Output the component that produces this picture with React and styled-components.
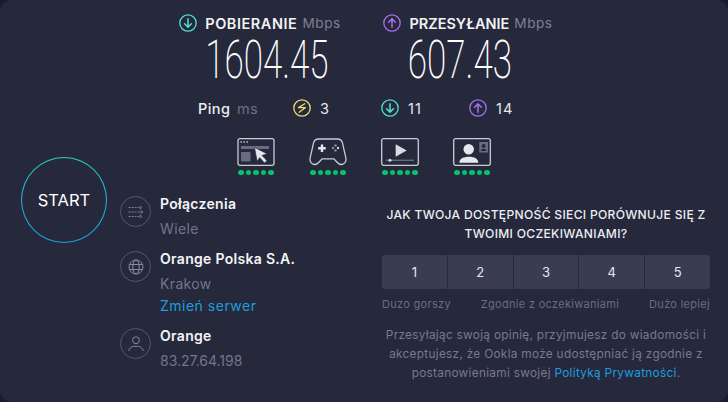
import React from "react";
import styled, { createGlobalStyle } from "styled-components";

const Global = createGlobalStyle`
  html, body { margin: 0; padding: 0; background: #1a1b2e; }
  #root { width: 728px; height: 402px; }
  * { box-sizing: border-box; }
`;

const Page = styled.div`
  width: 728px; height: 402px; background: #26283c; border-radius: 12px; overflow: hidden;
  font-family: Inter, "Liberation Sans", sans-serif; color: #fff; display: flex; flex-direction: column;
`;
const Speeds = styled.div`
  display: flex; height: 95px; padding: 13px 0 0 180px; gap: 44px;
`;
const SpeedCol = styled.div`
  display: flex; flex-direction: column; align-items: center; width: ${p => p.$w}px;
`;
const SpeedHead = styled.div`
  display: flex; align-items: center; gap: 8px; height: 20px; font-size: 14.5px; letter-spacing: ${p => p.$ls}px; font-weight: 600; color: #f2f3f5;
  white-space: nowrap;
`;
const Unit = styled.span`
  font-weight: 400; color: #7f8094; margin-left: -3px; font-size: 13.6px; letter-spacing: .55px;
`;
const Big = styled.div`
  font-family: Roboto, sans-serif; font-weight: 200; font-size: 53px; line-height: 50px; color: #fff;
  margin-top: 2px; white-space: nowrap; transform: translateX(${p => p.$shift}px) scaleX(.66);
`;
const PingRow = styled.div`
  display: flex; align-items: center; height: 26px; padding-left: 198px; font-size: 14.5px;
`;
const PingLabel = styled.span`
  width: 39px; font-weight: 500; color: #eceef2; letter-spacing: .4px;
`;
const PingUnit = styled.span`
  width: 56px; color: #6f7084; letter-spacing: .4px;
`;
const PingItem = styled.span`
  display: flex; align-items: center; gap: 9px; width: ${p => p.$w}px; color: #e8e9ee; letter-spacing: 1px;
`;
const Main = styled.div`
  display: flex; flex: 1; min-height: 0;
`;
const StartCol = styled.div`
  width: 120px; flex: none; padding: 36px 0 0 21px;
`;
const Start = styled.div`
  width: 86px; height: 86px; border-radius: 50%; display: flex; align-items: center; justify-content: center;
  font-size: 16.5px; font-weight: 400; color: #fff;
  background: linear-gradient(#26283c, #26283c) padding-box, linear-gradient(#2fcfc0, #1c9fdc) border-box;
  border: 1px solid transparent;
`;
const RightCol = styled.div`
  flex: 1; display: flex; flex-direction: column; min-width: 0;
`;
const Perf = styled.div`
  display: flex; padding: 17px 0 0 117px; gap: 34px; height: 62px;
`;
const PerfItem = styled.div`
  width: 38px; display: flex; flex-direction: column; align-items: center; gap: 4px;
`;
const Dots = styled.div`
  display: flex; gap: 2.2px;
`;
const Dot = styled.i`
  width: 5.4px; height: 5.4px; border-radius: 50%; background: #06c16e; display: block;
`;
const Lower = styled.div`
  display: flex; flex: 1; min-height: 0;
`;
const InfoCol = styled.div`
  width: 250px; flex: none; display: flex; flex-direction: column; padding-top: 13px;
`;
const InfoRow = styled.div`
  display: flex; gap: 9px; height: ${p => p.$h}px;
`;
const IconRing = styled.div`
  width: 31px; height: 31px; border: 1px solid #565769; border-radius: 50%; display: flex; align-items: center; justify-content: center; flex: none;
`;
const InfoText = styled.div`
  display: flex; flex-direction: column; margin-top: -4px;
`;
const InfoTitle = styled.div`
  font-size: 14px; font-weight: 600; letter-spacing: .3px; line-height: 24px; color: #f4f5f7;
`;
const InfoSub = styled.div`
  font-size: 14px; letter-spacing: ${p => (p.$tight ? "-.02px" : ".35px")}; line-height: 25px; color: #74758a;
`;
const InfoLink = styled.a`
  font-size: 14px; letter-spacing: .5px; line-height: 20px; color: #1c9fdc;
`;
const Survey = styled.div`
  width: 352px; padding-top: 22px; display: flex; flex-direction: column;
`;
const Question = styled.div`
  text-align: center; font-size: 12.1px; font-weight: 500; line-height: 19px; color: #eceef2; letter-spacing: .3px; white-space: nowrap;
`;
const Scale = styled.div`
  display: grid; grid-template-columns: repeat(5, 1fr); gap: 1px; margin: 12px 0 0 12px; border-radius: 3px; overflow: hidden; width: 328px;
`;
const ScaleBtn = styled.div`
  height: 34px; background: #3a3c51; display: flex; align-items: center; justify-content: center; font-size: 13px; color: #e6e7ec;
`;
const ScaleLabels = styled.div`
  display: flex; justify-content: space-between; width: 328px; margin: 8px 0 0 12px; font-size: 11px; color: #6b6c80; letter-spacing: .3px; line-height: 14px;
`;
const Legal = styled.div`
  margin-top: 15px; text-align: center; font-size: 11.8px; line-height: 19px; color: #797a8e; letter-spacing: .3px; white-space: nowrap;
`;
const LegalLink = styled.a`
  color: #1c9fdc;
`;

const Arrow = ({ color, up }) => (
  <svg width="18" height="18" viewBox="0 0 18 18" fill="none" stroke={color} strokeWidth="1.3" strokeLinecap="round" strokeLinejoin="round">
    <circle cx="9" cy="9" r="8.2" />
    {up ? <path d="M9 13.2V5M5.6 8.2L9 4.9l3.4 3.3" strokeWidth="1.5" /> : <path d="M9 4.8V13M5.6 9.8L9 13.1l3.4-3.3" strokeWidth="1.5" />}
  </svg>
);
const Bolt = () => (
  <svg width="18" height="18" viewBox="0 0 18 18" fill="none" stroke="#f0dc6e" strokeWidth="1.3" strokeLinecap="round" strokeLinejoin="round">
    <circle cx="9" cy="9" r="8.2" />
    <path d="M11.8 4.8L5.5 8.6h7L6.2 13.2" />
  </svg>
);
const BrowserIcon = () => (
  <svg width="38" height="28" viewBox="0 0 38 28" fill="none">
    <rect x="1" y=".7" width="36" height="26.6" rx="2" stroke="#c9cbd6" strokeWidth="1.3" />
    <path d="M3.5 4h1.4M6.5 4h1.4M9.5 4h1.4" stroke="#c9cbd6" strokeWidth="1.4" />
    <rect x="4" y="8" width="28" height="3" fill="#6a6b80" />
    <rect x="4" y="14" width="9.5" height="9.5" rx="1" fill="#6a6b80" />
    <path d="M17.500 9.500l12.500 6.200-5 1.800 5 5.200-2.600 2.300-4.600-5.400-2.600 3.600z" fill="#e6e7ee" stroke="#26283c" strokeWidth=".6" />
  </svg>
);
const GameIcon = () => (
  <svg width="38" height="28" viewBox="0 0 38 28" fill="none">
    <path d="M9.500 1h19c2.600 0 4.200 1.400 4.900 3.600l3.400 15c.8 3.600-1 6.600-4 6.900-2.200.2-3.600-.9-5-2.500L25 20.800H13l-2.800 3.200c-1.400 1.600-2.800 2.700-5 2.500-3-.3-4.800-3.300-4-6.900l3.400-15C5.300 2.400 6.900 1 9.500 1z" stroke="#c9cbd6" strokeWidth="1.3" />
    <path d="M13 6.500v7.500M9.200 10.200h7.500" stroke="#e6e7ee" strokeWidth="2.4" />
    <circle cx="26.500" cy="7.500" r="1.2" fill="#8a8b9d" /><circle cx="26.500" cy="12.500" r="1.2" fill="#8a8b9d" />
    <circle cx="24" cy="10" r="1.2" fill="#8a8b9d" /><circle cx="29" cy="10" r="1.2" fill="#c9cbd6" />
  </svg>
);
const VideoIcon = () => (
  <svg width="38" height="28" viewBox="0 0 38 28" fill="none">
    <rect x=".7" y=".7" width="36.6" height="26.6" rx="2" stroke="#c9cbd6" strokeWidth="1.3" />
    <path d="M14.700 6.300l11 6.200-11 6.200z" fill="#d9dae2" />
    <rect x="5" y="21.600" width="28" height="1.400" fill="#6a6b80" />
    <circle cx="9" cy="22.300" r="1.500" fill="#d9dae2" />
  </svg>
);
const ChatIcon = () => (
  <svg width="38" height="28" viewBox="0 0 38 28" fill="none">
    <rect x=".7" y=".7" width="36.6" height="26.6" rx="2" stroke="#c9cbd6" strokeWidth="1.3" />
    <circle cx="15.700" cy="11.300" r="5.200" fill="#e6e7ee" />
    <path d="M6.300 24.700c0-4 4-6 9.500-6s9.500 2 9.500 6z" fill="#e6e7ee" />
    <rect x="26.300" y="4" width="8.700" height="10.500" fill="#6a6b80" />
    <circle cx="30.600" cy="8" r="2" fill="#26283c" />
    <path d="M27.800 13c0-1.500 1.300-2.300 2.800-2.300s2.800.8 2.800 2.300z" fill="#26283c" />
  </svg>
);
const LinesIcon = () => (
  <svg width="16" height="12" viewBox="0 0 16 12" fill="none" stroke="#7c7d90" strokeWidth="1">
    <path d="M.5 1.500h12M.5 6h13M.5 10.500h12" strokeDasharray="2 1" />
    <path d="M11.500 0l2.500 1.500-2.500 1.500M12.500 4.500L15 6l-2.500 1.500M11.500 9l2.500 1.500-2.500 1.500" />
  </svg>
);
const GlobeIcon = () => (
  <svg width="16" height="16" viewBox="0 0 16 16" fill="none" stroke="#8a8b9d" strokeWidth="1">
    <circle cx="8" cy="8" r="7" />
    <ellipse cx="8" cy="8" rx="3.200" ry="7" />
    <path d="M1.500 5.500h13M1.500 10.500h13" />
  </svg>
);
const UserIcon = () => (
  <svg width="16" height="16" viewBox="0 0 16 16" fill="none" stroke="#8a8b9d" strokeWidth="1">
    <circle cx="8" cy="4.200" r="3.400" />
    <path d="M.8 15c.4-3.400 3.400-4.800 7.200-4.800s6.800 1.400 7.200 4.800" />
  </svg>
);

const FiveDots = () => <Dots>{[0, 1, 2, 3, 4].map(i => <Dot key={i} />)}</Dots>;

export default function App() {
  return (
    <Page>
      <Global />
      <Speeds>
        <SpeedCol $w={160}>
          <SpeedHead $ls={0.55}><Arrow color="#4fdfd3" />POBIERANIE <Unit>Mbps</Unit></SpeedHead>
          <Big $shift={6.5}>1604.45</Big>
        </SpeedCol>
        <SpeedCol $w={168}>
          <SpeedHead $ls={0}><Arrow color="#a66ff0" up />PRZESYŁANIE <Unit>Mbps</Unit></SpeedHead>
          <Big $shift={-8}>607.43</Big>
        </SpeedCol>
      </Speeds>
      <PingRow>
        <PingLabel>Ping</PingLabel>
        <PingUnit>ms</PingUnit>
        <PingItem $w={88}><Bolt />3</PingItem>
        <PingItem $w={88}><Arrow color="#4fdfd3" />11</PingItem>
        <PingItem $w={50}><Arrow color="#a66ff0" up />14</PingItem>
      </PingRow>
      <Main>
        <StartCol><Start>START</Start></StartCol>
        <RightCol>
          <Perf>
            <PerfItem><BrowserIcon /><FiveDots /></PerfItem>
            <PerfItem><GameIcon /><FiveDots /></PerfItem>
            <PerfItem><VideoIcon /><FiveDots /></PerfItem>
            <PerfItem><ChatIcon /><FiveDots /></PerfItem>
          </Perf>
          <Lower>
            <InfoCol>
              <InfoRow $h={55}>
                <IconRing><LinesIcon /></IconRing>
                <InfoText><InfoTitle>Połączenia</InfoTitle><InfoSub>Wiele</InfoSub></InfoText>
              </InfoRow>
              <InfoRow $h={77}>
                <IconRing><GlobeIcon /></IconRing>
                <InfoText><InfoTitle>Orange Polska S.A.</InfoTitle><InfoSub>Krakow</InfoSub><InfoLink>Zmień serwer</InfoLink></InfoText>
              </InfoRow>
              <InfoRow $h={50}>
                <IconRing><UserIcon /></IconRing>
                <InfoText><InfoTitle>Orange</InfoTitle><InfoSub $tight>83.27.64.198</InfoSub></InfoText>
              </InfoRow>
            </InfoCol>
            <Survey>
              <Question>JAK TWOJA DOSTĘPNOŚĆ SIECI PORÓWNUJE SIĘ Z<br />TWOIMI OCZEKIWANIAMI?</Question>
              <Scale>{[1, 2, 3, 4, 5].map(n => <ScaleBtn key={n}>{n}</ScaleBtn>)}</Scale>
              <ScaleLabels><span>Duzo gorszy</span><span>Zgodnie z oczekiwaniami</span><span>Dużo lepiej</span></ScaleLabels>
              <Legal>
                Przesyłając swoją opinię, przyjmujesz do wiadomości i<br />
                akceptujesz, że Ookla może udostępniać ją zgodnie z<br />
                postanowieniami swojej <LegalLink>Polityką Prywatności</LegalLink>.
              </Legal>
            </Survey>
          </Lower>
        </RightCol>
      </Main>
    </Page>
  );
}
